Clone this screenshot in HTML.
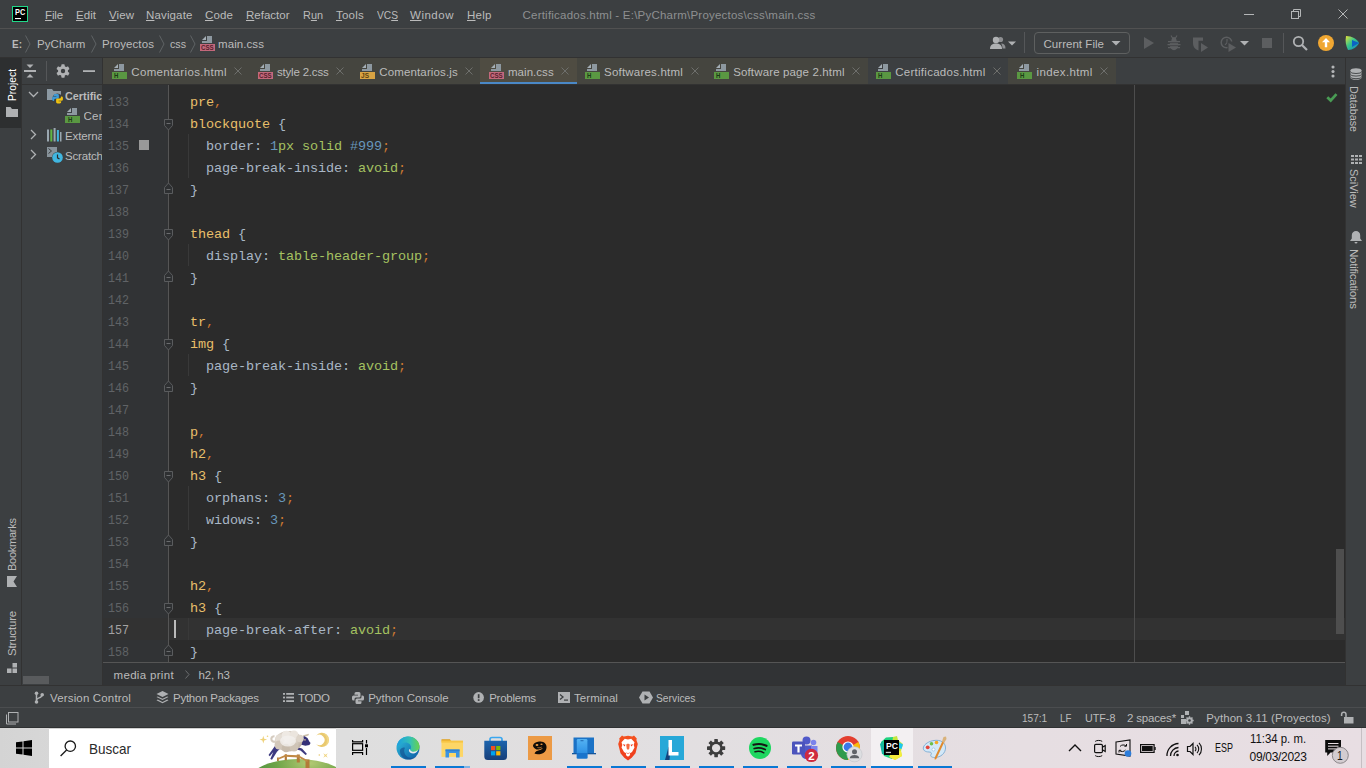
<!DOCTYPE html>
<html lang="en">
<head>
<meta charset="utf-8">
<title>PyCharm</title>
<style>
*{box-sizing:border-box;margin:0;padding:0}
html,body{width:1366px;height:768px;overflow:hidden;background:#3c3f41}
body{font-family:"Liberation Sans",sans-serif;font-size:12px;color:#bbbbbb;position:relative}
.abs,.b,svg{position:absolute}
svg{overflow:visible}
.t{position:absolute;white-space:pre}
.m{font-family:"Liberation Mono",monospace}
u{text-decoration:underline;text-underline-offset:1px;text-decoration-thickness:1px}
#menubar{left:0;top:0;width:1366px;height:29px;background:#3c3f41;border-bottom:1px solid #515151}
#navbar{left:0;top:29px;width:1366px;height:29px;background:#3c3f41;border-bottom:1px solid #323232}
#tabrow{left:103px;top:58px;width:1243px;height:27px;background:#3c3f41;border-bottom:1px solid #323232}
#leftstripe{left:0;top:58px;width:22px;height:627px;background:#3c3f41;border-right:1px solid #323232}
#project{left:22px;top:58px;width:81px;height:627px;background:#3c3f41}
#rightstripe{left:1345px;top:58px;width:21px;height:627px;background:#3c3f41;border-left:1px solid #323232}
#editor{left:103px;top:85px;width:1242px;height:577px;background:#2b2b2b}
#gutter{left:103px;top:85px;width:65px;height:577px;background:#313335}
#crumbs{left:103px;top:662px;width:1242px;height:23px;background:#313335;border-top:1px solid #555555}
#toolbar2{left:0;top:685px;width:1366px;height:23px;background:#3c3f41;border-top:1px solid #323232}
#status{left:0;top:707px;width:1366px;height:21px;background:#3c3f41;border-top:1px solid #4b4d4f;border-bottom:1px solid #2f3132}
#taskbar{left:0;top:728px;width:1366px;height:40px;background:linear-gradient(90deg,#d4d4d4 0,#d7d7d7 4%,#dedede 25%,#e2dfe1 50%,#e6dee2 75%,#e8dee3 100%)}
.sel{color:#e8bf6a}.k{color:#cc7832}.v{color:#a5c261}.n{color:#6897bb}
.tab{position:absolute;top:58px;height:26px;background:#45453f}
.vt{position:absolute;white-space:nowrap;font-size:12px;line-height:14px;height:14px;transform-origin:0 0}
</style>
</head>
<body>
<div id="menubar" class="abs"></div>
<div id="navbar" class="abs"></div>
<div id="leftstripe" class="abs"></div>
<div id="project" class="abs"></div>
<div id="tabrow" class="abs"></div>
<div id="editor" class="abs"></div>
<div id="gutter" class="abs"></div>
<div id="rightstripe" class="abs"></div>
<div id="crumbs" class="abs"></div>
<div id="toolbar2" class="abs"></div>
<div id="status" class="abs"></div>
<div id="taskbar" class="abs"></div>
<svg style="left:12px;top:6px" width="16" height="16" viewBox="0 0 16 16"><rect x="0" y="0" width="16" height="16" fill="#21d789"/><rect x="1" y="1" width="14" height="14" fill="#000"/><rect x="3" y="12" width="6" height="1.100" fill="#fff"/></svg>
<svg style="left:1240px;top:5px" width="120" height="20" viewBox="0 0 120 20" fill="none" stroke="#b4b6b7" stroke-width="1"><path d="M4 9.5h10"/><rect x="51.500" y="6.500" width="7" height="7"/><path d="M53.500 6.500v-2h7v7h-2"/><path d="M98.500 4.500l9 9m0-9l-9 9"/></svg>
<svg style="left:25px;top:35px" width="7" height="18" viewBox="0 0 7 18" fill="none" stroke="#5f6365" stroke-width="1"><path d="M0.500 0.500l4.500 8.500l-4.500 8.500"/></svg>
<svg style="left:91px;top:35px" width="7" height="18" viewBox="0 0 7 18" fill="none" stroke="#5f6365" stroke-width="1"><path d="M0.500 0.500l4.500 8.500l-4.500 8.500"/></svg>
<svg style="left:159px;top:35px" width="7" height="18" viewBox="0 0 7 18" fill="none" stroke="#5f6365" stroke-width="1"><path d="M0.500 0.500l4.500 8.500l-4.500 8.500"/></svg>
<svg style="left:190px;top:35px" width="7" height="18" viewBox="0 0 7 18" fill="none" stroke="#5f6365" stroke-width="1"><path d="M0.500 0.500l4.500 8.500l-4.500 8.500"/></svg>
<svg style="left:200px;top:36px" width="15" height="15" viewBox="0 0 15 15"><path d="M7 0h5v7h-10v-2h5z" fill="#8d98a0"/><path d="M6 0v4h-4z" fill="#a4aeb5"/><rect x="0" y="8" width="15" height="7" fill="#c3687b"/></svg>
<svg style="left:988px;top:33px" width="380" height="22" viewBox="0 0 380 22">
<g fill="#afb1b3"><circle cx="8" cy="7" r="3.200"/><path d="M2 16c0-4 2.500-5.500 6-5.500s6 1.500 6 5.500z"/><circle cx="12.500" cy="6.500" r="2.600" fill-opacity=".7"/><path d="M13 10.500c3 0 4.500 1.500 4.500 5h-3c0-2-.5-4-1.500-5z" fill-opacity=".7"/><path d="M20 8.500h8l-4 4z"/></g>
<rect x="36" y="-1" width="1" height="21" fill="#555759"/>
<rect x="46.500" y="-0.500" width="95" height="21" rx="3.500" fill="none" stroke="#5e6060"/>
<path d="M123.500 8h9l-4.500 4.500z" fill="#afb1b3"/>
<g fill="#5c5e60"><path d="M156 4l10 6l-10 6z"/>
<ellipse cx="186" cy="11.700" rx="4.300" ry="5.500"/><circle cx="186" cy="6.200" r="2.300"/><path d="M183 2.500l1.800 3M189 2.500l-1.800 3" stroke="#5c5e60" stroke-width="1.100" fill="none"/><path d="M180 8h12v1.300h-12zM179.500 11h13v1.300h-13zM180 14h12v1.300h-12z"/><path d="M182 9.700h8M182 12.700h8" stroke="#3c3f41" stroke-width=".8"/>
<path d="M205 4.500h10v3.200h-4.500v9.800c-3-.8-5.500-3.500-5.500-7.500z"/><path d="M213 10l7 4.500l-7 4.500z"/>
<circle cx="238.500" cy="9.500" r="5.300" fill="none" stroke="#5c5e60" stroke-width="1.500"/><path d="M239 6v3.800l-2 2" fill="none" stroke="#5c5e60" stroke-width="1.200"/><path d="M239.500 8.500h9.500v11h-9.500z" fill="#3c3f41"/><path d="M240.500 10l7.500 4.500l-7.500 4.500z"/>
<rect x="274" y="5" width="10" height="10"/></g>
<path d="M252 8h9l-4.500 4.500z" fill="#afb1b3"/>
<rect x="295" y="0" width="1" height="20" fill="#555759"/>
<circle cx="310.500" cy="8.500" r="4.700" fill="none" stroke="#afb1b3" stroke-width="1.800"/><path d="M314 12l5 5" stroke="#afb1b3" stroke-width="2.200"/>
<circle cx="338" cy="10" r="8" fill="#f0a732"/><path d="M338 5l4 4.200h-2.800v5h-2.400v-5h-2.800z" fill="#fff"/>
<defs><linearGradient id="tb" x1="0" y1="0" x2="1" y2="1"><stop offset="0" stop-color="#e8e337"/><stop offset=".45" stop-color="#37c58a"/><stop offset="1" stop-color="#0a7bd0"/></linearGradient></defs>
<path d="M358 3c6 0 11 3 13 7c-2 4-6 7-11 7c-2-4-3-9-2-14z" fill="url(#tb)"/><path d="M364 7l7 3l-7 4z" fill="#0b62c4"/>
</svg>
<div class="tab" style="left:103px;width:146px;background:#45453f"></div>
<svg style="left:111.9px;top:64px" width="15" height="15" viewBox="0 0 15 15"><path d="M7 0h5v7h-10v-2h5z" fill="#8d98a0"/><path d="M6 0v4h-4z" fill="#a4aeb5"/><rect x="0" y="8" width="15" height="7" fill="#5a9842"/></svg>
<svg style="left:234.4px;top:67px" width="8" height="8" viewBox="0 0 8 8" stroke="#6e6f6c" stroke-width="1" fill="none"><path d="M0.500 0.500l7 7m0-7l-7 7"/></svg>
<div class="tab" style="left:249px;width:102px;background:#45453f"></div>
<svg style="left:257.6px;top:64px" width="15" height="15" viewBox="0 0 15 15"><path d="M7 0h5v7h-10v-2h5z" fill="#8d98a0"/><path d="M6 0v4h-4z" fill="#a4aeb5"/><rect x="0" y="8" width="15" height="7" fill="#c3687b"/></svg>
<svg style="left:336.0px;top:67px" width="8" height="8" viewBox="0 0 8 8" stroke="#6e6f6c" stroke-width="1" fill="none"><path d="M0.500 0.500l7 7m0-7l-7 7"/></svg>
<div class="tab" style="left:351px;width:129px;background:#45453f"></div>
<svg style="left:359.9px;top:64px" width="15" height="15" viewBox="0 0 15 15"><path d="M7 0h5v7h-10v-2h5z" fill="#8d98a0"/><path d="M6 0v4h-4z" fill="#a4aeb5"/><rect x="0" y="8" width="15" height="7" fill="#d9a343"/></svg>
<svg style="left:465.4px;top:67px" width="8" height="8" viewBox="0 0 8 8" stroke="#6e6f6c" stroke-width="1" fill="none"><path d="M0.500 0.500l7 7m0-7l-7 7"/></svg>
<div class="tab" style="left:480px;width:97px;background:#4f4c42"></div>
<div class="b" style="left:480px;top:81.500px;width:97px;height:2.500px;background:#4a88c7"></div>
<svg style="left:488.6px;top:64px" width="15" height="15" viewBox="0 0 15 15"><path d="M7 0h5v7h-10v-2h5z" fill="#8d98a0"/><path d="M6 0v4h-4z" fill="#a4aeb5"/><rect x="0" y="8" width="15" height="7" fill="#c3687b"/></svg>
<svg style="left:561.2px;top:67px" width="8" height="8" viewBox="0 0 8 8" stroke="#6e6f6c" stroke-width="1" fill="none"><path d="M0.500 0.500l7 7m0-7l-7 7"/></svg>
<div class="tab" style="left:577px;width:128px;background:#45453f"></div>
<svg style="left:584.6px;top:64px" width="15" height="15" viewBox="0 0 15 15"><path d="M7 0h5v7h-10v-2h5z" fill="#8d98a0"/><path d="M6 0v4h-4z" fill="#a4aeb5"/><rect x="0" y="8" width="15" height="7" fill="#5a9842"/></svg>
<svg style="left:690.5px;top:67px" width="8" height="8" viewBox="0 0 8 8" stroke="#6e6f6c" stroke-width="1" fill="none"><path d="M0.500 0.500l7 7m0-7l-7 7"/></svg>
<div class="tab" style="left:705px;width:163px;background:#45453f"></div>
<svg style="left:713.8px;top:64px" width="15" height="15" viewBox="0 0 15 15"><path d="M7 0h5v7h-10v-2h5z" fill="#8d98a0"/><path d="M6 0v4h-4z" fill="#a4aeb5"/><rect x="0" y="8" width="15" height="7" fill="#5a9842"/></svg>
<svg style="left:852.1px;top:67px" width="8" height="8" viewBox="0 0 8 8" stroke="#6e6f6c" stroke-width="1" fill="none"><path d="M0.500 0.500l7 7m0-7l-7 7"/></svg>
<div class="tab" style="left:868px;width:140px;background:#3c3f41"></div>
<svg style="left:875.8px;top:64px" width="15" height="15" viewBox="0 0 15 15"><path d="M7 0h5v7h-10v-2h5z" fill="#8d98a0"/><path d="M6 0v4h-4z" fill="#a4aeb5"/><rect x="0" y="8" width="15" height="7" fill="#5a9842"/></svg>
<svg style="left:993.0px;top:67px" width="8" height="8" viewBox="0 0 8 8" stroke="#6e6f6c" stroke-width="1" fill="none"><path d="M0.500 0.500l7 7m0-7l-7 7"/></svg>
<div class="tab" style="left:1008px;width:108px;background:#45453f"></div>
<svg style="left:1017.1px;top:64px" width="15" height="15" viewBox="0 0 15 15"><path d="M7 0h5v7h-10v-2h5z" fill="#8d98a0"/><path d="M6 0v4h-4z" fill="#a4aeb5"/><rect x="0" y="8" width="15" height="7" fill="#5a9842"/></svg>
<svg style="left:1100.2px;top:67px" width="8" height="8" viewBox="0 0 8 8" stroke="#6e6f6c" stroke-width="1" fill="none"><path d="M0.500 0.500l7 7m0-7l-7 7"/></svg>
<svg style="left:1331px;top:64.500px" width="4" height="14" viewBox="0 0 4 14" fill="#b4b6b8"><circle cx="2" cy="2" r="1.550"/><circle cx="2" cy="6.500" r="1.550"/><circle cx="2" cy="11" r="1.550"/></svg>
<div class="b" style="left:0;top:58px;width:21px;height:70px;background:#2d2f30"></div>
<svg style="left:6px;top:107px" width="12" height="10" viewBox="0 0 12 10"><path d="M0 0h4.500l1.500 2h6v8h-12z" fill="#afb1b3"/></svg>
<svg style="left:7px;top:576px" width="10" height="11" viewBox="0 0 10 11"><path d="M0 0h10l-3.500 5.500l3.500 5.500h-10z" fill="#afb1b3" transform="rotate(0)"/></svg>
<svg style="left:7px;top:663px" width="10" height="10" viewBox="0 0 10 10" fill="#afb1b3"><rect x="5.500" y="0" width="4.500" height="4.500"/><rect x="0" y="5.500" width="4.500" height="4.500"/><rect x="5.500" y="5.500" width="4.500" height="4.500"/></svg>
<div class="b" style="left:22px;top:84px;width:81px;height:1px;background:#323232"></div>
<svg style="left:22px;top:58px" width="80" height="26" viewBox="0 0 80 26"><g fill="#afb1b3"><rect x="2" y="12" width="12" height="2"/><path d="M4.500 6.500h7l-3.500 3.500zM4.500 19.500h7l-3.500-3.500z"/><rect x="61" y="12.200" width="12" height="1.800"/></g><rect x="24" y="3" width="1" height="20" fill="#555759"/>
<g transform="translate(41 13)" fill="#afb1b3"><circle r="5"/><g><rect x="-1.700" y="-6.700" width="3.400" height="13.400" rx=".8"/><rect x="-1.700" y="-6.700" width="3.400" height="13.400" rx=".8" transform="rotate(60)"/><rect x="-1.700" y="-6.700" width="3.400" height="13.400" rx=".8" transform="rotate(120)"/></g><circle r="2.200" fill="#3c3f41"/></g></svg>
<svg style="left:28px;top:91px" width="11" height="7" viewBox="0 0 11 7" fill="none" stroke="#afb1b3" stroke-width="1.300"><path d="M1 1l4.500 4.500l4.500-4.500"/></svg>
<svg style="left:30px;top:129px" width="7" height="11" viewBox="0 0 7 11" fill="none" stroke="#afb1b3" stroke-width="1.300"><path d="M1 1l4.500 4.500l-4.500 4.500"/></svg>
<svg style="left:30px;top:149px" width="7" height="11" viewBox="0 0 7 11" fill="none" stroke="#afb1b3" stroke-width="1.300"><path d="M1 1l4.500 4.500l-4.500 4.500"/></svg>
<svg style="left:47px;top:89px" width="16" height="15" viewBox="0 0 16 15"><path d="M0 0h5l1.500 2h7.500v9h-14z" fill="#8c99a2"/><circle cx="10.500" cy="9.700" r="5.200" fill="#3c3f41"/><path d="M8.200 5h2.300a1.400 1.400 0 0 1 1.400 1.400v2.200a1.200 1.200 0 0 1 -1.200 1.200h-2.200a1.400 1.400 0 0 0 -1.400 1.400v.8h-.6a1.400 1.400 0 0 1 -1.400-1.400v-1.600a1.400 1.400 0 0 1 1.400-1.400h2.900v-.5h-2.600v-.7a1.400 1.400 0 0 1 1.400-1.400z" fill="#3d9ad5"/><path d="M12.800 14.400h-2.300a1.400 1.400 0 0 1 -1.400-1.400v-2.200a1.200 1.200 0 0 1 1.200-1.200h2.200a1.400 1.400 0 0 0 1.400-1.400v-.8h.6a1.400 1.400 0 0 1 1.400 1.400v1.600a1.400 1.400 0 0 1 -1.400 1.400h-2.900v.5h2.600v.7a1.400 1.400 0 0 1 -1.400 1.400z" fill="#f0c20f"/></svg>
<svg style="left:65px;top:108px" width="15" height="15" viewBox="0 0 15 15"><path d="M7 0h5v7h-10v-2h5z" fill="#8d98a0"/><path d="M6 0v4h-4z" fill="#a4aeb5"/><rect x="0" y="8" width="15" height="7" fill="#5a9842"/></svg>
<svg style="left:47px;top:128px" width="15" height="14" viewBox="0 0 15 14"><rect x="0" y="1.500" width="2" height="12" fill="#9aa7b0"/><rect x="3.300" y="1.500" width="2" height="12" fill="#62b543"/><rect x="6.600" y="0" width="2" height="13.500" fill="#9aa7b0"/><rect x="9.900" y="2" width="2" height="11.500" fill="#40b6e0"/><rect x="13" y="4" width="1.500" height="9.500" fill="#9aa7b0"/></svg>
<svg style="left:47px;top:147px" width="16" height="16" viewBox="0 0 16 16"><path d="M0 0h10v5a5.500 5.500 0 0 0 -5 5h-5z" fill="#9aa7b0" fill-opacity=".8"/><path d="M1.500 1.500l3 2.500l-3 2.500" fill="none" stroke="#3c3f41" stroke-width="1"/><circle cx="10.500" cy="10.500" r="5.300" fill="#40b6e0"/><path d="M10.500 7.500v3.300l2 1.200" fill="none" stroke="#2b2b2b" stroke-width="1.200"/></svg>
<div class="b" style="left:102px;top:58px;width:1px;height:627px;background:#323232"></div>
<div class="b" style="left:23px;top:676px;width:26px;height:8px;background:#595b5d"></div>
<div class="b" style="left:103px;top:618px;width:1242px;height:22px;background:#323232"></div>
<div class="b" style="left:168px;top:85px;width:1px;height:577px;background:#555555"></div>
<div class="b" style="left:1134px;top:85px;width:1px;height:577px;background:#4d4d4d"></div>
<div class="b" style="left:1336px;top:549px;width:8px;height:85px;background:#4e4e4e"></div>
<div class="b" style="left:139px;top:140px;width:10px;height:10px;background:#999999"></div>
<div class="b" style="left:174px;top:620px;width:2px;height:18px;background:#bbbbbb"></div>
<svg style="left:1326px;top:92px" width="12" height="10" viewBox="0 0 12 10"><path d="M1.300 5.200l3.400 3.300l5.800-6.300" fill="none" stroke="#499c54" stroke-width="2.700"/></svg>
<div class="b" style="left:188px;top:134px;width:1px;height:44px;background:#393939"></div>
<div class="b" style="left:188px;top:244px;width:1px;height:22px;background:#393939"></div>
<div class="b" style="left:188px;top:354px;width:1px;height:22px;background:#393939"></div>
<div class="b" style="left:188px;top:486px;width:1px;height:44px;background:#393939"></div>
<div class="b" style="left:188px;top:618px;width:1px;height:22px;background:#393939"></div>
<svg style="left:164px;top:119px" width="9" height="12" viewBox="0 0 9 12"><path d="M0.500 0.500h8v6l-4 4.500l-4-4.500z" fill="#2e3032" stroke="#5a5c5e"/><path d="M2.500 4.5h4" stroke="#6a6c6e"/></svg>
<svg style="left:164px;top:229px" width="9" height="12" viewBox="0 0 9 12"><path d="M0.500 0.500h8v6l-4 4.500l-4-4.500z" fill="#2e3032" stroke="#5a5c5e"/><path d="M2.500 4.5h4" stroke="#6a6c6e"/></svg>
<svg style="left:164px;top:339px" width="9" height="12" viewBox="0 0 9 12"><path d="M0.500 0.500h8v6l-4 4.500l-4-4.500z" fill="#2e3032" stroke="#5a5c5e"/><path d="M2.500 4.5h4" stroke="#6a6c6e"/></svg>
<svg style="left:164px;top:471px" width="9" height="12" viewBox="0 0 9 12"><path d="M0.500 0.500h8v6l-4 4.500l-4-4.500z" fill="#2e3032" stroke="#5a5c5e"/><path d="M2.500 4.5h4" stroke="#6a6c6e"/></svg>
<svg style="left:164px;top:603px" width="9" height="12" viewBox="0 0 9 12"><path d="M0.500 0.500h8v6l-4 4.500l-4-4.500z" fill="#2e3032" stroke="#5a5c5e"/><path d="M2.500 4.5h4" stroke="#6a6c6e"/></svg>
<svg style="left:164px;top:182px" width="9" height="12" viewBox="0 0 9 12"><path d="M0.500 11.500h8v-6l-4-4.500l-4 4.500z" fill="#2e3032" stroke="#5a5c5e"/><path d="M2.500 7.5h4" stroke="#6a6c6e"/></svg>
<svg style="left:164px;top:270px" width="9" height="12" viewBox="0 0 9 12"><path d="M0.500 11.500h8v-6l-4-4.500l-4 4.500z" fill="#2e3032" stroke="#5a5c5e"/><path d="M2.500 7.5h4" stroke="#6a6c6e"/></svg>
<svg style="left:164px;top:380px" width="9" height="12" viewBox="0 0 9 12"><path d="M0.500 11.500h8v-6l-4-4.500l-4 4.500z" fill="#2e3032" stroke="#5a5c5e"/><path d="M2.500 7.5h4" stroke="#6a6c6e"/></svg>
<svg style="left:164px;top:534px" width="9" height="12" viewBox="0 0 9 12"><path d="M0.500 11.500h8v-6l-4-4.500l-4 4.500z" fill="#2e3032" stroke="#5a5c5e"/><path d="M2.500 7.5h4" stroke="#6a6c6e"/></svg>
<svg style="left:164px;top:644px" width="9" height="12" viewBox="0 0 9 12"><path d="M0.500 11.500h8v-6l-4-4.500l-4 4.500z" fill="#2e3032" stroke="#5a5c5e"/><path d="M2.500 7.5h4" stroke="#6a6c6e"/></svg>
<svg style="left:185px;top:670px" width="5" height="9" viewBox="0 0 5 9" fill="none" stroke="#6b6d6f" stroke-width="1"><path d="M0.500 0.500l3.500 4l-3.500 4"/></svg>
<svg style="left:1350px;top:68px" width="12" height="12" viewBox="0 0 12 12"><path d="M.500 2.200a5.500 2 0 0 1 11 0v7.600a5.500 2 0 0 1 -11 0z" fill="#afb1b3"/><g fill="none" stroke="#3c3f41" stroke-width=".9"><path d="M.500 3.700a5.500 1.800 0 0 0 11 0"/><path d="M.500 6.300a5.500 1.800 0 0 0 11 0"/><path d="M.500 8.900a5.500 1.800 0 0 0 11 0"/></g></svg>
<svg style="left:1351px;top:155px" width="11" height="9" viewBox="0 0 11 9" fill="#afb1b3"><rect x="0" y="0" width="3" height="2"/><rect x="4" y="0" width="3" height="2"/><rect x="8" y="0" width="3" height="2"/><rect x="0" y="3.500" width="3" height="2"/><rect x="4" y="3.500" width="3" height="2"/><rect x="8" y="3.500" width="3" height="2"/><rect x="0" y="7" width="3" height="2"/><rect x="4" y="7" width="3" height="2"/><rect x="8" y="7" width="3" height="2"/></svg>
<svg style="left:1350px;top:231px" width="12" height="13" viewBox="0 0 12 13" fill="#afb1b3"><path d="M6 0a4.200 4.200 0 0 1 4.200 4.200v3.300l1.800 2.500h-12l1.800-2.500v-3.300a4.200 4.200 0 0 1 4.200-4.200z"/><path d="M4.500 11h3a1.500 1.500 0 0 1 -3 0z"/></svg>
<svg style="left:34px;top:691px" width="11" height="13" viewBox="0 0 11 13"><g fill="none" stroke="#afb1b3" stroke-width="1.500"><path d="M2.500 2v9.500"/><path d="M2.500 9c0-2.800 5.500-1.500 5.500-5"/></g><circle cx="8.200" cy="3.700" r="1.800" fill="#afb1b3"/><circle cx="2.500" cy="2.200" r="1.800" fill="#afb1b3"/><circle cx="2.500" cy="11" r="1.800" fill="#afb1b3"/></svg>
<svg style="left:156px;top:691px" width="13" height="13" viewBox="0 0 13 13" fill="#afb1b3"><path d="M6.500 0l6 3l-6 3l-6-3z"/><path d="M1.800 5.400l4.700 2.300l4.700-2.300l1.300.7l-6 3l-6-3z"/><path d="M1.800 8.600l4.700 2.300l4.700-2.300l1.300.7l-6 3l-6-3z"/></svg>
<svg style="left:283px;top:693px" width="11" height="9" viewBox="0 0 11 9" fill="#afb1b3"><rect x="0" y="0" width="2" height="1.800"/><rect x="3.200" y="0" width="7.800" height="1.800"/><rect x="0" y="3.600" width="2" height="1.800"/><rect x="3.200" y="3.600" width="7.800" height="1.800"/><rect x="0" y="7.200" width="2" height="1.800"/><rect x="3.200" y="7.200" width="7.800" height="1.800"/></svg>
<svg style="left:352px;top:692px" width="12" height="12" viewBox="0 0 12 12" fill="#afb1b3"><path d="M4 0h3a1.500 1.500 0 0 1 1.500 1.500v2.500a1.500 1.500 0 0 1 -1.500 1.500h-3a1.500 1.500 0 0 0 -1.500 1.500v1.500h-1a1.500 1.500 0 0 1 -1.500-1.500v-2a1.500 1.500 0 0 1 1.500-1.500h4.500v-.700h-3.500v-1.300a1.500 1.500 0 0 1 1.500-1.500z"/><path d="M8 12h-3a1.500 1.500 0 0 1 -1.500-1.500v-2.500a1.500 1.500 0 0 1 1.500-1.500h3a1.500 1.500 0 0 0 1.500-1.500v-1.500h1a1.500 1.500 0 0 1 1.500 1.500v2a1.500 1.500 0 0 1 -1.500 1.500h-4.500v.700h3.500v1.300a1.500 1.500 0 0 1 -1.500 1.500z"/></svg>
<svg style="left:473px;top:691.500px" width="12" height="12" viewBox="0 0 12 12"><circle cx="5.600" cy="5.400" r="5.300" fill="#afb1b3"/><rect x="4.800" y="2.200" width="1.700" height="4" fill="#3c3f41"/><rect x="4.800" y="7.200" width="1.700" height="1.700" fill="#3c3f41"/></svg>
<svg style="left:558px;top:692px" width="12" height="11" viewBox="0 0 12 11"><rect x="0" y="0" width="12" height="11" fill="#afb1b3"/><path d="M2 2.500l3 2.500l-3 2.500" fill="none" stroke="#3c3f41" stroke-width="1.300"/><rect x="6" y="7.500" width="4" height="1.200" fill="#3c3f41"/></svg>
<svg style="left:639px;top:691px" width="14" height="13" viewBox="0 0 14 13"><path d="M3.500 0.500h7l3.500 6l-3.500 6h-7l-3.500-6z" fill="#afb1b3"/><path d="M5.500 3.500l4.500 3l-4.500 3z" fill="#3c3f41"/></svg>
<svg style="left:6px;top:712px" width="13" height="13" viewBox="0 0 13 13" fill="none" stroke="#afb1b3" stroke-width="1"><rect x="2.500" y="0.500" width="9.500" height="9.500"/><path d="M0.500 2.500v9.500h9.500"/></svg>
<svg style="left:1181px;top:711px" width="12" height="13" viewBox="0 0 12 13" fill="#afb1b3"><rect x="0" y="4" width="3" height="3"/><rect x="4" y="0" width="4" height="4"/><rect x="0" y="8" width="5" height="5"/><g transform="translate(8.500 9.500)"><circle r="3.300"/><circle r="1.300" fill="#3c3f41"/><path d="M-.7-4.200h1.400v8.400h-1.400zM-4.200-.7h8.400v1.400h-8.400z"/><path d="M-.7-4.200h1.400v8.400h-1.400zM-4.200-.7h8.400v1.400h-8.400z" transform="rotate(45)"/><circle r="1.300" fill="#3c3f41"/></g></svg>
<svg style="left:1341px;top:711px" width="13" height="13" viewBox="0 0 13 13"><rect x="3" y="6" width="9.500" height="6.500" fill="#afb1b3"/><path d="M5 6v-2.500a2.200 2.200 0 0 0 -4.400 0v1.500" fill="none" stroke="#afb1b3" stroke-width="1.500"/></svg>
<div class="b" style="left:49px;top:728px;width:287px;height:40px;background:#ffffff;border-top:1px solid #d0d0d0"></div>
<svg style="left:16px;top:740px" width="16" height="16" viewBox="0 0 16 16" fill="#000"><path d="M0 2.300l6.500-.9v6.100h-6.500zM7.500 1.250l8.500-1.250v7.500h-8.500zM0 8.500h6.500v6.100l-6.500-.9zM7.500 8.500h8.500v7.500l-8.500-1.250z"/></svg>
<svg style="left:60px;top:740px" width="17" height="17" viewBox="0 0 17 17" fill="none" stroke="#1a1a1a" stroke-width="1.300"><circle cx="10.300" cy="6.200" r="5.200"/><path d="M6.600 10l-6 6"/></svg>
<svg style="left:256px;top:729px;overflow:hidden" width="80" height="39" viewBox="0 0 80 39">
<defs><radialGradient id="hill" cx=".62" cy=".1" r=".75"><stop offset="0" stop-color="#b4c974"/><stop offset=".45" stop-color="#6fa548"/><stop offset="1" stop-color="#3a8537"/></radialGradient>
<radialGradient id="wool" cx=".4" cy=".45" r=".65"><stop offset="0" stop-color="#f4f1ee"/><stop offset=".6" stop-color="#d9d0c5"/><stop offset="1" stop-color="#b9ab9b"/></radialGradient></defs>
<ellipse cx="42" cy="52" rx="49" ry="22" fill="url(#hill)"/>
<path d="M21 28.500h1.800v3.500h-1.800zM28.700 25.200h2.200v6h-2.200zM40.800 25.400h3v8h-3zM49.500 30.500h4v8.500h-4z" fill="#b27a38"/><path d="M21.500 29.200l8-3.500l13 .5l9 5v1.800l-9-4.600l-13-.7l-8 3.300z" fill="#c18a45"/>
<path d="M20 15.500l-7.500 10.500l1.300 1.200l3.500-4.200l-3 7l1.700.8l5-8l4.500-4.500z" fill="#3d3a80"/><path d="M41 18l5 1.500l5 5.500l-1.500 1l-5-4.500l-6-1.500z" fill="#3d3a80"/>
<path d="M18.500 7.300c-2.500-.3-3.800 2-2.800 4c.8 1.500 2.500 1.800 3.500 1" fill="none" stroke="#d5cbbf" stroke-width="2.200"/>
<path d="M47 6.200l6-1.400l-.6 1.700l-4.400 1.500z" fill="#cdbfa9"/>
<path d="M42 9l6.500-1.800l3 1.800l1.800 3.500l1.300 1.500l-1.200 2l-4 .7l-5-1.200l-2.800-3z" fill="#343078"/><circle cx="49" cy="10.800" r=".9" fill="#d8c2a4"/><circle cx="49.100" cy="10.900" r=".45" fill="#1c1940"/>
<ellipse cx="32.500" cy="12.300" rx="13.800" ry="10.300" fill="url(#wool)"/><circle cx="24" cy="10" r="4.800" fill="#e4ddd4"/><circle cx="30.500" cy="6.500" r="4.800" fill="#eee9e3"/><circle cx="38" cy="6" r="4.500" fill="#ebe5de"/><circle cx="44" cy="9.500" r="3.800" fill="#ddd4c9"/><circle cx="23" cy="16" r="4.500" fill="#d2c7ba"/><circle cx="30" cy="19" r="4.300" fill="#c8bcad"/><circle cx="38" cy="18" r="4.500" fill="#cfc4b6"/><ellipse cx="32" cy="12" rx="8" ry="5.500" fill="#f3f0ed" fill-opacity=".8"/>
<path d="M60.100 6.800A7.100 7.100 0 1 1 60.100 15A5.200 5.200 0 1 0 60.100 6.800Z" fill="#e9c96f"/><path d="M67 4A7.100 7.100 0 0 1 69 17.200A9 9 0 0 0 67 4Z" fill="#f1d98c" fill-opacity=".8"/>
<path d="M7.300 6.800l.9 2.900l2.900.9l-2.900.9l-.9 2.900l-.9-2.900l-2.900-.9l2.900-.9z" fill="#efd27a"/><circle cx="11.500" cy="7.200" r=".8" fill="#efd27a"/><circle cx="63.300" cy="26" r=".8" fill="#e9c96f"/><path d="M67.200 24.200l2.300 1.500l2.300-1.500l-1.500 2.300l1.500 2.300l-2.300-1.500l-2.300 1.500l1.500-2.300z" fill="#efd27a"/>
</svg>
<svg style="left:352px;top:740px" width="17" height="15" viewBox="0 0 17 15" fill="none" stroke="#000" stroke-width="1.200"><path d="M0.600 0v1.900h10v-1.900"/><rect x="0.600" y="3.700" width="10" height="6.600"/><path d="M0.600 15v-2.400h10v2.400"/><path d="M14.500 0v3.500M14.500 8v7"/><rect x="13" y="4.300" width="3" height="3" fill="#000" stroke="none"/></svg>
<div class="b" style="left:871px;top:728px;width:42px;height:40px;background:#f3f0f2"></div>
<div class="b" style="left:391px;top:766px;width:35px;height:2px;background:#0a78d4"></div>
<div class="b" style="left:435px;top:766px;width:29px;height:2px;background:#0a78d4"></div>
<div class="b" style="left:464px;top:766px;width:6px;height:2px;background:#7db4e6"></div>
<div class="b" style="left:567px;top:766px;width:35px;height:2px;background:#0a78d4"></div>
<div class="b" style="left:611px;top:766px;width:35px;height:2px;background:#0a78d4"></div>
<div class="b" style="left:655px;top:766px;width:35px;height:2px;background:#0a78d4"></div>
<div class="b" style="left:699px;top:766px;width:35px;height:2px;background:#0a78d4"></div>
<div class="b" style="left:743px;top:766px;width:35px;height:2px;background:#0a78d4"></div>
<div class="b" style="left:787px;top:766px;width:35px;height:2px;background:#0a78d4"></div>
<div class="b" style="left:831px;top:766px;width:35px;height:2px;background:#0a78d4"></div>
<div class="b" style="left:871px;top:766px;width:42px;height:2px;background:#0a78d4"></div>
<div class="b" style="left:918px;top:766px;width:34px;height:2px;background:#0a78d4"></div>
<svg style="left:396px;top:736px" width="24" height="24" viewBox="0 0 24 24"><defs><linearGradient id="e1" x1="0" y1="0" x2="1" y2="1"><stop offset="0" stop-color="#2fc2df"/><stop offset="1" stop-color="#0c59a4"/></linearGradient><linearGradient id="e2" x1="0" y1="0" x2="1" y2="0"><stop offset="0" stop-color="#1b9de2"/><stop offset=".6" stop-color="#35c1b1"/><stop offset="1" stop-color="#6ad24b"/></linearGradient></defs>
<circle cx="12" cy="12" r="11.500" fill="url(#e1)"/><path d="M1 10c1-6 6-9.500 11-9.500c7 0 11.500 5 11.500 10c0 3.500-2.500 5.500-5.500 5.500c-2.500 0-4-1-4-2c0-1 1-1 1-3c0-2-2-4.500-5.500-4.500c-4 0-7 2.500-8.500 3.500z" fill="url(#e2)"/><path d="M9 12c-1.500 2-1 6 2 8.500c3 2.300 7 1.500 9.500-.5c-2 3-5.500 4-9 3.500c-5-1-8-5-7.500-9.500c1-2 3.500-3 5-2z" fill="#114a8b" fill-opacity=".6"/><path d="M14 13c0 1 .5 2 2 2.500c2 .6 4.500 0 6-2c-1 4-5 5-8 3c-1.500-1.200-1.500-3 0-3.500z" fill="#e9e9ee"/></svg>
<svg style="left:440.500px;top:738.500px" width="22.500" height="19" viewBox="0 0 24 22" preserveAspectRatio="none"><path d="M0.500 0.300h9l1.500 2.200h-10.500z" fill="#e0a01b"/><rect x="0.500" y="2" width="23" height="18.700" fill="#fdd666"/><path d="M0.500 2h23v2.200h-23z" fill="#f7c545"/><path d="M4.800 12.200h15v9.300h-3.800v-5.200h-7.400v5.200h-3.800z" fill="#3b93e3"/><path d="M4.800 12.200h15v2h-15z" fill="#2f7fd0"/></svg>
<svg style="left:484px;top:736px" width="24" height="24" viewBox="0 0 24 24"><defs><linearGradient id="stg" x1="0" y1="0" x2="0" y2="1"><stop offset="0" stop-color="#1c64ad"/><stop offset="1" stop-color="#173f7a"/></linearGradient></defs><path d="M6 6.500v-3a2 2 0 0 1 2-2h8a2 2 0 0 1 2 2v3" fill="none" stroke="#3ba7ef" stroke-width="1.700"/><path d="M0.300 4.800h22.700v15.700a3.500 3.500 0 0 1 -3.500 3.500h-15.700a3.500 3.500 0 0 1 -3.500-3.500z" fill="url(#stg)"/><rect x="7" y="10" width="4.200" height="4.200" fill="#f25022"/><rect x="12.200" y="10" width="4.200" height="4.200" fill="#7fba00"/><rect x="7" y="15.200" width="4.200" height="4.200" fill="#00a4ef"/><rect x="12.200" y="15.200" width="4.200" height="4.200" fill="#ffb900"/></svg>
<svg style="left:528px;top:736px" width="24" height="24" viewBox="0 0 24 24"><rect width="24" height="24" fill="#ec9a45"/><path d="M5 9.500c.5-2 2.500-3.500 5-3.700c1.500-.5 3.500-.6 5.200.2c2.500 1 3.600 3.400 3.300 6c-.3 2.800-2.300 5-5 5.800c-2.300.7-5.500.8-7-.2c.8-1.800 2.500-3 4.500-3.300c1.500-.2 3-.8 3.700-2.200l-3.200 1.200c-2.500.8-5-.3-6-2.300c-.4-.5-.6-1-.5-1.500z" fill="#0f0c08"/><ellipse cx="9" cy="9" rx="1.400" ry=".9" fill="#ec9a45"/><ellipse cx="13.500" cy="8.300" rx="1.200" ry=".8" fill="#ec9a45"/><path d="M9.500 11.500c1.500.5 3 .3 4.200-.5" stroke="#ec9a45" stroke-width=".7" fill="none"/></svg>
<svg style="left:572px;top:737px" width="24" height="23" viewBox="0 0 24 23"><defs><linearGradient id="ph" x1="0" y1="0" x2="0" y2="1"><stop offset="0" stop-color="#55b3f3"/><stop offset=".5" stop-color="#3a9cea"/><stop offset="1" stop-color="#1f7fd6"/></linearGradient></defs><path d="M1.500 .500h20.500v16h-20.500z" fill="#1b72c6"/><path d="M0 16h24v1.300h-24z" fill="#15569b"/><rect x="4.800" y="2" width="10.600" height="19.500" rx="1.300" fill="url(#ph)"/><rect x="4.800" y="16" width="10.600" height="5.500" fill="#1a74cc"/><rect x="8.500" y="3.300" width="3" height=".9" fill="#1b5fa8"/></svg>
<svg style="left:617px;top:735px" width="22" height="26" viewBox="0 0 22 26"><defs><linearGradient id="brv" x1="0" y1="0" x2="0" y2="1"><stop offset="0" stop-color="#f4521f"/><stop offset="1" stop-color="#ee3b1e"/></linearGradient></defs><path d="M11 .800l4.300.6l1.700-.8l2.800 2.800l-.4 1.700l1.400 3.800l-2.300 9.300l-3.800 4.600l-3.700 2.700l-3.700-2.700l-3.800-4.600l-2.300-9.300l1.400-3.800l-.4-1.700l2.800-2.800l1.700.8z" fill="url(#brv)"/><path d="M11 4.500l3.200-.8l3.300 3.500l-.8 2.800l.8 2.600l-2.500 4.400l-2.300 1.500l.5 1.500l-2.200 1.800l-2.200-1.800l.5-1.500l-2.300-1.500l-2.500-4.400l.8-2.600l-.8-2.800l3.300-3.500z" fill="#fff"/><path d="M11 8.500l1.800 1l-.6 4.500l-1.200.8l-1.200-.8l-.6-4.500z" fill="#f4501f" fill-opacity=".85"/><path d="M5.800 9.300l2.700.5l-1 1.700zM16.200 9.300l-2.700.5l1 1.700z" fill="#ee3b1e"/><path d="M8.500 17l2.500 1.200l2.500-1.200l-2.500 2z" fill="#ee3b1e"/></svg>
<svg style="left:660px;top:736px" width="24" height="24" viewBox="0 0 24 24"><rect width="24" height="24" fill="#27a8d8"/><path d="M5 24l3.500-13l2 0l-1 13z" fill="#14427c"/><path d="M8.500 4h3.500v12h6.500v3.500h-10z" fill="#fff"/></svg>
<svg style="left:706.900px;top:738.900px" width="18.200" height="18.200" viewBox="-9.100 -9.100 18.200 18.200"><g fill="#3d3d3d"><circle r="6.700"/><rect x="-1.800" y="-9.100" width="3.600" height="18.200" rx=".4"/><rect x="-1.800" y="-9.100" width="3.600" height="18.200" rx=".4" transform="rotate(45)"/><rect x="-1.800" y="-9.100" width="3.600" height="18.200" rx=".4" transform="rotate(90)"/><rect x="-1.800" y="-9.100" width="3.600" height="18.200" rx=".4" transform="rotate(135)"/></g><circle r="4.150" fill="#e2dfe1"/></svg>
<svg style="left:749px;top:737px" width="22" height="22" viewBox="0 0 22 22"><circle cx="11" cy="11" r="11" fill="#1ed760"/><g fill="none" stroke="#141414" stroke-linecap="round"><path d="M4.500 7.800c4.500-1.300 9-1 13 1" stroke-width="2.200"/><path d="M5.200 11.500c4-1 7.500-.7 11 1" stroke-width="1.800"/><path d="M6 14.800c3-.8 6-.5 8.800 1" stroke-width="1.500"/></g></svg>
<svg style="left:791px;top:735px" width="28" height="28" viewBox="0 0 28 28"><circle cx="15.500" cy="5.500" r="4" fill="#5059c9"/><circle cx="22.500" cy="7.500" r="2.800" fill="#7b83eb"/><path d="M10 10.500h11v8a5.500 5.500 0 0 1 -11 0z" fill="#5059c9"/><path d="M20 11h6.500v6a3.500 3.500 0 0 1 -6.500 1.500z" fill="#7b83eb"/><rect x="1" y="6.500" width="13" height="13" rx="1.200" fill="#4b53bc"/><path d="M4 9.500h7v2h-2.400v6h-2.200v-6h-2.400z" fill="#fff"/><circle cx="20.400" cy="20.400" r="6.700" fill="#cf2a3e"/></svg>
<svg style="left:836px;top:736px" width="28" height="27" viewBox="0 0 28 27"><circle cx="12" cy="12" r="12" fill="#e33e2f"/><path d="M12 12L22.390 6A12 12 0 0 1 12 24Z" fill="#f9bb0b"/><path d="M12 12L12 24A12 12 0 0 1 1.610 6Z" fill="#2e9b4e"/><circle cx="12" cy="11" r="5.600" fill="#fff"/><circle cx="12" cy="11" r="4.400" fill="#3b78e7"/><circle cx="18.500" cy="18.300" r="7.600" fill="#dddee1" stroke="#c3c5c9" stroke-width=".6"/><circle cx="18.500" cy="15.800" r="2.500" fill="#5f6368"/><path d="M13.700 22.300c.3-2.600 2.200-3.400 4.800-3.400s4.500.8 4.800 3.400z" fill="#5f6368"/></svg>
<svg style="left:880px;top:736px" width="24" height="24" viewBox="0 0 24 24"><path d="M1 6l5-4.500l7-.5l4 1l-1 10l-4 11l-8-3l-3-8z" fill="#1fd27f"/><path d="M13 1l4-1l1 4l5 4l-2 7l1 5l-7 4l-5-3z" fill="#c5e63e"/><path d="M12 16l9-1l1 5l-7 4l-6-3z" fill="#f5ec3c"/><path d="M18.500 6l4.500 2.500l-1.500 4.500l-3.500-1z" fill="#1cc7f0"/><path d="M0 8l3-3l2 14l-3-1z" fill="#17b6a0"/><rect x="4" y="4" width="15" height="15" fill="#000"/><rect x="5.800" y="15.800" width="5.200" height="1.300" fill="#c8c8c8"/></svg>
<svg style="left:921px;top:734px" width="28" height="28" viewBox="0 0 28 28"><path d="M13 6.500c6-1 11.500 1.500 11.500 7.500c0 5-4.500 9.500-11 9.500c-3 0-4.500-1.500-3.500-3c1-1.500 0-2.500-2-2.500c-4 0-6.500-2-5.500-5c1-3 5.500-5.800 10.500-6.500z" fill="#d3e8f8" stroke="#79a9d1" stroke-width=".9"/><circle cx="6.700" cy="13.300" r="1.900" fill="#e2453c"/><circle cx="10.500" cy="9.800" r="1.800" fill="#6cc04a"/><circle cx="15.500" cy="8.500" r="1.800" fill="#f4a825"/><circle cx="12.500" cy="15.500" r="1.500" fill="#fff" stroke="#8fb5d6" stroke-width=".6"/><path d="M21.500 7l1.800 1l-8 17l-1.500.7l-.3-1.700z" fill="#e08a2e"/><path d="M21 7.500l1.500-4.500l2.500-.5l.5 2.500l-2.500 4z" fill="#d9b27a"/></svg>
<svg style="left:1066px;top:738px" width="142" height="22" viewBox="0 0 142 22" fill="none" stroke="#111" stroke-width="1.200">
<path d="M3 13l6-6l6 6" stroke-width="1.400"/>
<rect x="28.600" y="6.400" width="7.800" height="8.200" rx="1.200"/><path d="M36.400 9.300l2.800-1.800v6l-2.800-1.800"/><path d="M29.200 3.400c1.500-1.300 5.500-1.300 7 0M29.200 17.600c1.500 1.300 5.500 1.300 7 0" stroke-width="1"/>
<path d="M50 4l14-2v16l-14-2z" stroke-width="1.100"/><path d="M54 8.500c1.500-2 4.500-2 6-.5M60.500 6v2.200h-2.200M59.500 12c-1.500 2-4.500 2-6 .5M53 14.500v-2.200h2.200" stroke-width="1"/>
<circle cx="62" cy="15.500" r="3.300" fill="#2d7ddb" stroke="none"/>
<rect x="74.600" y="6.600" width="13.500" height="7.800"/><rect x="76" y="8" width="10.700" height="5" fill="#111" stroke="none"/><path d="M89 9v3" stroke-width="1.400"/>
<g stroke-width="1.300"><path d="M101 18a12 12 0 0 1 11.500-12.500" /><path d="M104.500 18a8.500 8.500 0 0 1 8-8.500"/><path d="M108 18a5 5 0 0 1 4.500-5"/></g><circle cx="111.500" cy="17" r="1.300" fill="#111" stroke="none"/>
<path d="M121.500 8.500h2.500l3-3v11l-3-3h-2.500z"/><path d="M129 8.800a3 3 0 0 1 0 4.400M131 6.800a6 6 0 0 1 0 8.400M133 4.800a9 9 0 0 1 0 12.400" stroke-width="1.100"/>
</svg>
<svg style="left:1324px;top:739px" width="26" height="26" viewBox="0 0 26 26"><path d="M1.200 1h15.800v12.500h-10.500l-3.300 3.500v-3.500h-2z" fill="#0c0c0c"/><path d="M4 4.500h10.500M4 7.200h10.500M4 9.900h10.500" stroke="#e6dde1" stroke-width="1"/><circle cx="16.300" cy="16.300" r="8" fill="#d3ccd0" stroke="#8c878a" stroke-width="1"/></svg>
<div class="b" style="left:1361px;top:728px;width:1px;height:40px;background:#c6bfc3"></div>
<div class="t" style="left:14.90px;top:7.00px;font-size:8.5px;line-height:10px;color:#ffffff;transform-origin:0 0;transform:scaleX(0.8635);font-weight:bold;">PC</div>
<div class="t" style="left:45.00px;top:9.00px;font-size:11.5px;line-height:12px;color:#bbbbbb;letter-spacing:-0.133px;"><u>F</u>ile</div>
<div class="t" style="left:76.00px;top:9.00px;font-size:11.5px;line-height:12px;color:#bbbbbb;letter-spacing:0.043px;"><u>E</u>dit</div>
<div class="t" style="left:109.00px;top:9.00px;font-size:11.5px;line-height:12px;color:#bbbbbb;letter-spacing:0.07px;"><u>V</u>iew</div>
<div class="t" style="left:146.00px;top:9.00px;font-size:11.5px;line-height:12px;color:#bbbbbb;letter-spacing:0.139px;"><u>N</u>avigate</div>
<div class="t" style="left:205.00px;top:9.00px;font-size:11.5px;line-height:12px;color:#bbbbbb;letter-spacing:0.125px;"><u>C</u>ode</div>
<div class="t" style="left:246.00px;top:9.00px;font-size:11.5px;line-height:12px;color:#bbbbbb;letter-spacing:0.004px;"><u>R</u>efactor</div>
<div class="t" style="left:303.00px;top:9.00px;font-size:11.5px;line-height:12px;color:#bbbbbb;transform-origin:0 0;transform:scaleX(0.9474);">R<u>u</u>n</div>
<div class="t" style="left:336.00px;top:9.00px;font-size:11.5px;line-height:12px;color:#bbbbbb;letter-spacing:0.228px;"><u>T</u>ools</div>
<div class="t" style="left:377.00px;top:9.00px;font-size:11.5px;line-height:12px;color:#bbbbbb;transform-origin:0 0;transform:scaleX(0.8877);">VC<u>S</u></div>
<div class="t" style="left:410.00px;top:9.00px;font-size:11.5px;line-height:12px;color:#bbbbbb;letter-spacing:0.516px;"><u>W</u>indow</div>
<div class="t" style="left:467.00px;top:9.00px;font-size:11.5px;line-height:12px;color:#bbbbbb;letter-spacing:0.211px;"><u>H</u>elp</div>
<div class="t" style="left:522.50px;top:9.00px;font-size:11.5px;line-height:12px;color:#8e9091;letter-spacing:0.223px;">Certificados.html - E:\PyCharm\Proyectos\css\main.css</div>
<div class="t" style="left:12.00px;top:38.00px;font-size:11.5px;line-height:12px;color:#bbbbbb;transform-origin:0 0;transform:scaleX(0.8696);font-weight:bold;">E:</div>
<div class="t" style="left:37.00px;top:38.00px;font-size:11.5px;line-height:12px;color:#bbbbbb;letter-spacing:0.08px;">PyCharm</div>
<div class="t" style="left:102.00px;top:38.00px;font-size:11.5px;line-height:12px;color:#bbbbbb;letter-spacing:0.095px;">Proyectos</div>
<div class="t" style="left:170.00px;top:38.00px;font-size:11.5px;line-height:12px;color:#bbbbbb;transform-origin:0 0;transform:scaleX(0.9275);">css</div>
<div class="t" style="left:218.00px;top:38.00px;font-size:11.5px;line-height:12px;color:#bbbbbb;letter-spacing:0.078px;">main.css</div>
<div class="t" style="left:201.00px;top:44.00px;font-size:7px;line-height:7px;color:#55212d;transform-origin:0 0;transform:scaleX(0.8816);font-weight:bold;">CSS</div>
<div class="t" style="left:1043.50px;top:38.00px;font-size:11.5px;line-height:12px;color:#bbbbbb;letter-spacing:0.035px;">Current File</div>
<div class="t" style="left:114.40px;top:71.00px;font-size:7.5px;line-height:9px;color:#1d3916;transform-origin:0 0;transform:scaleX(0.8115);font-weight:bold;">H</div>
<div class="t" style="left:131.30px;top:66.00px;font-size:11.5px;line-height:12px;color:#bbbbbb;letter-spacing:0.342px;">Comentarios.html</div>
<div class="t" style="left:258.60px;top:72.00px;font-size:7px;line-height:7px;color:#55212d;transform-origin:0 0;transform:scaleX(0.8816);font-weight:bold;">CSS</div>
<div class="t" style="left:277.00px;top:66.00px;font-size:11.5px;line-height:12px;color:#bbbbbb;letter-spacing:-0.199px;">style 2.css</div>
<div class="t" style="left:361.40px;top:72.00px;font-size:7px;line-height:7px;color:#5e4310;transform-origin:0 0;transform:scaleX(0.9343);font-weight:bold;">JS</div>
<div class="t" style="left:379.30px;top:66.00px;font-size:11.5px;line-height:12px;color:#bbbbbb;letter-spacing:0.135px;">Comentarios.js</div>
<div class="t" style="left:489.60px;top:72.00px;font-size:7px;line-height:7px;color:#55212d;transform-origin:0 0;transform:scaleX(0.8816);font-weight:bold;">CSS</div>
<div class="t" style="left:508.00px;top:66.00px;font-size:11.5px;line-height:12px;color:#bbbbbb;letter-spacing:0.041px;">main.css</div>
<div class="t" style="left:587.10px;top:71.00px;font-size:7.5px;line-height:9px;color:#1d3916;transform-origin:0 0;transform:scaleX(0.8115);font-weight:bold;">H</div>
<div class="t" style="left:604.00px;top:66.00px;font-size:11.5px;line-height:12px;color:#bbbbbb;letter-spacing:0.21px;">Softwares.html</div>
<div class="t" style="left:716.30px;top:71.00px;font-size:7.5px;line-height:9px;color:#1d3916;transform-origin:0 0;transform:scaleX(0.8115);font-weight:bold;">H</div>
<div class="t" style="left:733.20px;top:66.00px;font-size:11.5px;line-height:12px;color:#bbbbbb;letter-spacing:0.136px;">Software page 2.html</div>
<div class="t" style="left:878.30px;top:71.00px;font-size:7.5px;line-height:9px;color:#1d3916;transform-origin:0 0;transform:scaleX(0.8115);font-weight:bold;">H</div>
<div class="t" style="left:895.20px;top:66.00px;font-size:11.5px;line-height:12px;color:#bbbbbb;letter-spacing:0.274px;">Certificados.html</div>
<div class="t" style="left:1019.60px;top:71.00px;font-size:7.5px;line-height:9px;color:#1d3916;transform-origin:0 0;transform:scaleX(0.8115);font-weight:bold;">H</div>
<div class="t" style="left:1036.50px;top:66.00px;font-size:11.5px;line-height:12px;color:#bbbbbb;letter-spacing:0.378px;">index.html</div>
<div class="t" style="left:6.00px;top:101.00px;font-size:11.5px;line-height:12px;color:#ffffff;transform-origin:0 0;transform:rotate(-90deg) scaleX(0.8939);">Project</div>
<div class="t" style="left:6.00px;top:570.50px;font-size:11px;line-height:12px;color:#bbbbbb;letter-spacing:-0.259px;transform-origin:0 0;transform:rotate(-90deg);">Bookmarks</div>
<div class="t" style="left:6.00px;top:656.00px;font-size:11.5px;line-height:12px;color:#bbbbbb;letter-spacing:-0.186px;transform-origin:0 0;transform:rotate(-90deg);">Structure</div>
<div class="t" style="left:65.00px;top:90.00px;font-size:11.5px;line-height:12px;color:#bbbbbb;transform-origin:0 0;transform:scaleX(0.9418);font-weight:bold;width:39.29px;overflow:hidden;">Certificados</div>
<div class="t" style="left:67.50px;top:115.00px;font-size:7.5px;line-height:9px;color:#1d3916;transform-origin:0 0;transform:scaleX(0.8115);font-weight:bold;">H</div>
<div class="t" style="left:83.50px;top:110.00px;font-size:11.5px;line-height:12px;color:#bbbbbb;letter-spacing:0.227px;width:18.50px;overflow:hidden;">Certificados.html</div>
<div class="t" style="left:65.00px;top:130.00px;font-size:11.5px;line-height:12px;color:#bbbbbb;letter-spacing:-0.138px;width:37.00px;overflow:hidden;">External Libraries</div>
<div class="t" style="left:65.00px;top:150.00px;font-size:11.5px;line-height:12px;color:#bbbbbb;letter-spacing:-0.166px;width:37.00px;overflow:hidden;">Scratches and Consoles</div>
<div class="t m" style="left:107.80px;top:96.00px;font-size:12.5px;line-height:14px;color:#606366;transform-origin:0 0;transform:scaleX(0.9327);">133</div>
<div class="t m" style="left:190.00px;top:95.00px;font-size:13.5px;line-height:15px;color:#a9b7c6;letter-spacing:-0.102px;"><span class="sel">pre</span><span class="k">,</span></div>
<div class="t m" style="left:107.80px;top:118.00px;font-size:12.5px;line-height:14px;color:#606366;transform-origin:0 0;transform:scaleX(0.9327);">134</div>
<div class="t m" style="left:190.00px;top:117.00px;font-size:13.5px;line-height:15px;color:#a9b7c6;letter-spacing:-0.102px;"><span class="sel">blockquote</span> {</div>
<div class="t m" style="left:107.80px;top:140.00px;font-size:12.5px;line-height:14px;color:#606366;transform-origin:0 0;transform:scaleX(0.9327);">135</div>
<div class="t m" style="left:190.00px;top:139.00px;font-size:13.5px;line-height:15px;color:#a9b7c6;letter-spacing:-0.102px;">  border: <span class="n">1</span><span class="v">px solid</span> <span class="n">#999</span><span class="k">;</span></div>
<div class="t m" style="left:107.80px;top:162.00px;font-size:12.5px;line-height:14px;color:#606366;transform-origin:0 0;transform:scaleX(0.9327);">136</div>
<div class="t m" style="left:190.00px;top:161.00px;font-size:13.5px;line-height:15px;color:#a9b7c6;letter-spacing:-0.102px;">  page-break-inside: <span class="v">avoid</span><span class="k">;</span></div>
<div class="t m" style="left:107.80px;top:184.00px;font-size:12.5px;line-height:14px;color:#606366;transform-origin:0 0;transform:scaleX(0.9327);">137</div>
<div class="t m" style="left:190.00px;top:183.00px;font-size:13.5px;line-height:15px;color:#a9b7c6;letter-spacing:-0.109px;">}</div>
<div class="t m" style="left:107.80px;top:206.00px;font-size:12.5px;line-height:14px;color:#606366;transform-origin:0 0;transform:scaleX(0.9327);">138</div>
<div class="t m" style="left:107.80px;top:228.00px;font-size:12.5px;line-height:14px;color:#606366;transform-origin:0 0;transform:scaleX(0.9327);">139</div>
<div class="t m" style="left:190.00px;top:227.00px;font-size:13.5px;line-height:15px;color:#a9b7c6;letter-spacing:-0.103px;"><span class="sel">thead</span> {</div>
<div class="t m" style="left:107.80px;top:250.00px;font-size:12.5px;line-height:14px;color:#606366;transform-origin:0 0;transform:scaleX(0.9327);">140</div>
<div class="t m" style="left:190.00px;top:249.00px;font-size:13.5px;line-height:15px;color:#a9b7c6;letter-spacing:-0.102px;">  display: <span class="v">table-header-group</span><span class="k">;</span></div>
<div class="t m" style="left:107.80px;top:272.00px;font-size:12.5px;line-height:14px;color:#606366;transform-origin:0 0;transform:scaleX(0.9327);">141</div>
<div class="t m" style="left:190.00px;top:271.00px;font-size:13.5px;line-height:15px;color:#a9b7c6;letter-spacing:-0.109px;">}</div>
<div class="t m" style="left:107.80px;top:294.00px;font-size:12.5px;line-height:14px;color:#606366;transform-origin:0 0;transform:scaleX(0.9327);">142</div>
<div class="t m" style="left:107.80px;top:316.00px;font-size:12.5px;line-height:14px;color:#606366;transform-origin:0 0;transform:scaleX(0.9327);">143</div>
<div class="t m" style="left:190.00px;top:315.00px;font-size:13.5px;line-height:15px;color:#a9b7c6;letter-spacing:-0.104px;"><span class="sel">tr</span><span class="k">,</span></div>
<div class="t m" style="left:107.80px;top:338.00px;font-size:12.5px;line-height:14px;color:#606366;transform-origin:0 0;transform:scaleX(0.9327);">144</div>
<div class="t m" style="left:190.00px;top:337.00px;font-size:13.5px;line-height:15px;color:#a9b7c6;letter-spacing:-0.103px;"><span class="sel">img</span> {</div>
<div class="t m" style="left:107.80px;top:360.00px;font-size:12.5px;line-height:14px;color:#606366;transform-origin:0 0;transform:scaleX(0.9327);">145</div>
<div class="t m" style="left:190.00px;top:359.00px;font-size:13.5px;line-height:15px;color:#a9b7c6;letter-spacing:-0.102px;">  page-break-inside: <span class="v">avoid</span><span class="k">;</span></div>
<div class="t m" style="left:107.80px;top:382.00px;font-size:12.5px;line-height:14px;color:#606366;transform-origin:0 0;transform:scaleX(0.9327);">146</div>
<div class="t m" style="left:190.00px;top:381.00px;font-size:13.5px;line-height:15px;color:#a9b7c6;letter-spacing:-0.109px;">}</div>
<div class="t m" style="left:107.80px;top:404.00px;font-size:12.5px;line-height:14px;color:#606366;transform-origin:0 0;transform:scaleX(0.9327);">147</div>
<div class="t m" style="left:107.80px;top:426.00px;font-size:12.5px;line-height:14px;color:#606366;transform-origin:0 0;transform:scaleX(0.9327);">148</div>
<div class="t m" style="left:190.00px;top:425.00px;font-size:13.5px;line-height:15px;color:#a9b7c6;letter-spacing:-0.102px;"><span class="sel">p</span><span class="k">,</span></div>
<div class="t m" style="left:107.80px;top:448.00px;font-size:12.5px;line-height:14px;color:#606366;transform-origin:0 0;transform:scaleX(0.9327);">149</div>
<div class="t m" style="left:190.00px;top:447.00px;font-size:13.5px;line-height:15px;color:#a9b7c6;letter-spacing:-0.104px;"><span class="sel">h2</span><span class="k">,</span></div>
<div class="t m" style="left:107.80px;top:470.00px;font-size:12.5px;line-height:14px;color:#606366;transform-origin:0 0;transform:scaleX(0.9327);">150</div>
<div class="t m" style="left:190.00px;top:469.00px;font-size:13.5px;line-height:15px;color:#a9b7c6;letter-spacing:-0.102px;"><span class="sel">h3</span> {</div>
<div class="t m" style="left:107.80px;top:492.00px;font-size:12.5px;line-height:14px;color:#606366;transform-origin:0 0;transform:scaleX(0.9327);">151</div>
<div class="t m" style="left:190.00px;top:491.00px;font-size:13.5px;line-height:15px;color:#a9b7c6;letter-spacing:-0.102px;">  orphans: <span class="n">3</span><span class="k">;</span></div>
<div class="t m" style="left:107.80px;top:514.00px;font-size:12.5px;line-height:14px;color:#606366;transform-origin:0 0;transform:scaleX(0.9327);">152</div>
<div class="t m" style="left:190.00px;top:513.00px;font-size:13.5px;line-height:15px;color:#a9b7c6;letter-spacing:-0.102px;">  widows: <span class="n">3</span><span class="k">;</span></div>
<div class="t m" style="left:107.80px;top:536.00px;font-size:12.5px;line-height:14px;color:#606366;transform-origin:0 0;transform:scaleX(0.9327);">153</div>
<div class="t m" style="left:190.00px;top:535.00px;font-size:13.5px;line-height:15px;color:#a9b7c6;letter-spacing:-0.109px;">}</div>
<div class="t m" style="left:107.80px;top:558.00px;font-size:12.5px;line-height:14px;color:#606366;transform-origin:0 0;transform:scaleX(0.9327);">154</div>
<div class="t m" style="left:107.80px;top:580.00px;font-size:12.5px;line-height:14px;color:#606366;transform-origin:0 0;transform:scaleX(0.9327);">155</div>
<div class="t m" style="left:190.00px;top:579.00px;font-size:13.5px;line-height:15px;color:#a9b7c6;letter-spacing:-0.104px;"><span class="sel">h2</span><span class="k">,</span></div>
<div class="t m" style="left:107.80px;top:602.00px;font-size:12.5px;line-height:14px;color:#606366;transform-origin:0 0;transform:scaleX(0.9327);">156</div>
<div class="t m" style="left:190.00px;top:601.00px;font-size:13.5px;line-height:15px;color:#a9b7c6;letter-spacing:-0.102px;"><span class="sel">h3</span> {</div>
<div class="t m" style="left:107.80px;top:624.00px;font-size:12.5px;line-height:14px;color:#a4a3a3;transform-origin:0 0;transform:scaleX(0.9327);">157</div>
<div class="t m" style="left:190.00px;top:623.00px;font-size:13.5px;line-height:15px;color:#a9b7c6;letter-spacing:-0.102px;">  page-break-after: <span class="v">avoid</span><span class="k">;</span></div>
<div class="t m" style="left:107.80px;top:646.00px;font-size:12.5px;line-height:14px;color:#606366;transform-origin:0 0;transform:scaleX(0.9327);">158</div>
<div class="t m" style="left:190.00px;top:645.00px;font-size:13.5px;line-height:15px;color:#a9b7c6;letter-spacing:-0.109px;">}</div>
<div class="t" style="left:113.50px;top:669.00px;font-size:11.5px;line-height:12px;color:#bbbbbb;letter-spacing:0.328px;">media print</div>
<div class="t" style="left:198.40px;top:669.00px;font-size:11.5px;line-height:12px;color:#bbbbbb;letter-spacing:-0.081px;">h2, h3</div>
<div class="t" style="left:1360.30px;top:86.00px;font-size:11.5px;line-height:12px;color:#bbbbbb;transform-origin:0 0;transform:rotate(90deg) scaleX(0.9343);">Database</div>
<div class="t" style="left:1360.30px;top:169.40px;font-size:11.5px;line-height:12px;color:#bbbbbb;transform-origin:0 0;transform:rotate(90deg) scaleX(0.9483);">SciView</div>
<div class="t" style="left:1360.30px;top:249.00px;font-size:11.5px;line-height:12px;color:#bbbbbb;letter-spacing:-0.226px;transform-origin:0 0;transform:rotate(90deg);">Notifications</div>
<div class="t" style="left:50.00px;top:692.00px;font-size:11.5px;line-height:12px;color:#bbbbbb;letter-spacing:0.158px;">Version Control</div>
<div class="t" style="left:173.00px;top:692.00px;font-size:11.5px;line-height:12px;color:#bbbbbb;letter-spacing:-0.254px;">Python Packages</div>
<div class="t" style="left:298.00px;top:692.00px;font-size:11.5px;line-height:12px;color:#bbbbbb;letter-spacing:-0.379px;">TODO</div>
<div class="t" style="left:368.20px;top:692.00px;font-size:11.5px;line-height:12px;color:#bbbbbb;letter-spacing:-0.057px;">Python Console</div>
<div class="t" style="left:489.20px;top:692.00px;font-size:11.5px;line-height:12px;color:#bbbbbb;letter-spacing:-0.247px;">Problems</div>
<div class="t" style="left:574.00px;top:692.00px;font-size:11.5px;line-height:12px;color:#bbbbbb;letter-spacing:0.066px;">Terminal</div>
<div class="t" style="left:656.30px;top:692.00px;font-size:11.5px;line-height:12px;color:#bbbbbb;transform-origin:0 0;transform:scaleX(0.8955);">Services</div>
<div class="t" style="left:1021.80px;top:712.00px;font-size:11.5px;line-height:12px;color:#bbbbbb;transform-origin:0 0;transform:scaleX(0.8756);">157:1</div>
<div class="t" style="left:1060.30px;top:712.00px;font-size:11.5px;line-height:12px;color:#bbbbbb;transform-origin:0 0;transform:scaleX(0.8419);">LF</div>
<div class="t" style="left:1084.50px;top:712.00px;font-size:11.5px;line-height:12px;color:#bbbbbb;transform-origin:0 0;transform:scaleX(0.9327);">UTF-8</div>
<div class="t" style="left:1127.00px;top:712.00px;font-size:11.5px;line-height:12px;color:#bbbbbb;letter-spacing:-0.168px;">2 spaces*</div>
<div class="t" style="left:1206.30px;top:712.00px;font-size:11.5px;line-height:12px;color:#bbbbbb;letter-spacing:0.082px;">Python 3.11 (Proyectos)</div>
<div class="t" style="left:88.60px;top:740.00px;font-size:15px;line-height:17px;color:#2a2a2a;transform-origin:0 0;transform:scaleX(0.9017);">Buscar</div>
<div class="t" style="left:808.20px;top:750.00px;font-size:11.5px;line-height:12px;color:#ffffff;letter-spacing:0.194px;font-weight:bold;">2</div>
<div class="t" style="left:885.80px;top:740.00px;font-size:9.5px;line-height:11px;color:#ffffff;transform-origin:0 0;transform:scaleX(0.9089);font-weight:bold;">PC</div>
<div class="t" style="left:1215.40px;top:741.00px;font-size:12px;line-height:14px;color:#111111;transform-origin:0 0;transform:scaleX(0.7453);">ESP</div>
<div class="t" style="left:1249.50px;top:732.00px;font-size:12px;line-height:14px;color:#111111;transform-origin:0 0;transform:scaleX(0.9483);">11:34 p. m.</div>
<div class="t" style="left:1249.50px;top:750.00px;font-size:12px;line-height:14px;color:#111111;letter-spacing:-0.296px;">09/03/2023</div>
<div class="t" style="left:1337.30px;top:748.00px;font-size:13px;line-height:15px;color:#1a1a1a;transform-origin:0 0;transform:scaleX(0.7879);">1</div>
</body>
</html>
